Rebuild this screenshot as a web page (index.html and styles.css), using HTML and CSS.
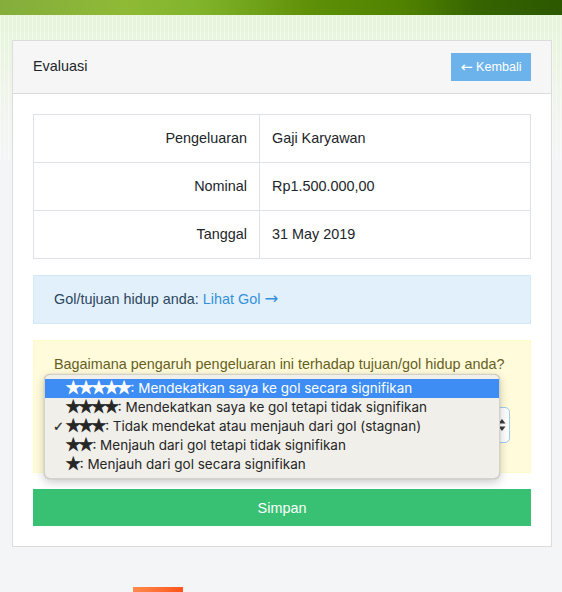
FILE: index.html
```html
<!DOCTYPE html>
<html lang="id">
<head>
<meta charset="utf-8">
<title>Evaluasi</title>
<link rel="stylesheet" href="styles.css">
</head>
<body>
<div class="topbar"></div>
<main class="page">
  <section class="card">
    <header class="card-header">
      <span class="card-title">Evaluasi</span>
      <a class="btn-back" href="#"><span class="arrow">←</span> Kembali</a>
    </header>
    <div class="card-body">
      <table class="detail">
        <colgroup><col class="col-label"><col></colgroup>
        <tr><th>Pengeluaran</th><td>Gaji Karyawan</td></tr>
        <tr><th>Nominal</th><td>Rp1.500.000,00</td></tr>
        <tr><th>Tanggal</th><td>31 May 2019</td></tr>
      </table>

      <div class="alert alert-info">Gol/tujuan hidup anda: <a class="link" href="#">Lihat Gol <span class="arrow">→</span></a></div>

      <div class="alert alert-warning">
        <div class="question">Bagaimana pengaruh pengeluaran ini terhadap tujuan/gol hidup anda?</div>
        <div class="select" role="combobox" aria-expanded="true">
          <svg class="select-arrows" width="8" height="14" viewBox="0 0 8 14"><path d="M4 1 L7.5 5.5 H0.5 Z M4 13 L7.5 8.5 H0.5 Z" fill="#3b3b3b"/></svg>
        </div>
        <ul class="menu" role="listbox">
          <li class="menu-item active"><span class="stars">★★★★★</span>: Mendekatkan saya ke gol secara signifikan</li>
          <li class="menu-item"><span class="stars">★★★★</span>: Mendekatkan saya ke gol tetapi tidak signifikan</li>
          <li class="menu-item checked"><span class="check">✓</span><span class="stars">★★★</span>: Tidak mendekat atau menjauh dari gol (stagnan)</li>
          <li class="menu-item"><span class="stars">★★</span>: Menjauh dari gol tetapi tidak signifikan</li>
          <li class="menu-item"><span class="stars">★</span>: Menjauh dari gol secara signifikan</li>
        </ul>
      </div>

      <button class="btn-save" type="button">Simpan</button>
    </div>
  </section>
  <div class="orange-tab"></div>
</main>
</body>
</html>
```

FILE: styles.css
```css
html, body {
  margin: 0;
  padding: 0;
}

body {
  font-family: "Liberation Sans", Arial, Helvetica, sans-serif;
  font-size: 14.4px;
  line-height: 1.6;
  color: #212529;
  background-color: #f4f5f7;
  background-image:
    repeating-linear-gradient(90deg, rgba(255,255,255,0.45) 0 1px, rgba(255,255,255,0) 1px 4px),
    linear-gradient(180deg, #e4f3d6 0px, #e9f5df 40px, #f1f5ee 110px, #f4f5f7 160px);
  background-size: 100% 160px, 100% 160px;
  background-repeat: no-repeat;
  overflow: hidden;
}

.topbar {
  height: 15px;
  background: linear-gradient(90deg, #84ad3c 0%, #8fba36 22%, #82b42c 35%, #5f9008 55%, #508200 72%, #366400 85%, #2c5800 100%);
}

.page {
  padding: 25px 10px 0 12px;
}

.card {
  width: 538px;
  background: #fff;
  border: 1px solid #dcdcdc;
}

.card-header {
  display: flex;
  align-items: center;
  justify-content: space-between;
  padding: 12px 20px;
  background: #f6f6f6;
  border-bottom: 1px solid #dcdcdc;
}

.card-title {
  line-height: 26px;
  padding-bottom: 2px;
}

.btn-back {
  display: inline-flex;
  align-items: center;
  justify-content: center;
  width: 80px;
  height: 28px;
  box-sizing: border-box;
  background: #6cb2eb;
  color: #fff;
  font-size: 12.6px;
  text-decoration: none;
  white-space: pre;
}

.arrow {
  font-family: "DejaVu Sans", sans-serif;
  font-size: 1.15em;
  line-height: 1;
}

.card-body {
  padding: 20px;
}

.detail {
  width: 100%;
  border-collapse: collapse;
  table-layout: fixed;
  margin-bottom: 16px;
}

.col-label {
  width: 226px;
}

.detail th,
.detail td {
  border: 1px solid #dee2e6;
  padding: 12px;
  height: 23px;
  font-weight: normal;
  vertical-align: middle;
}

.detail th {
  text-align: right;
}

.alert {
  padding: 12px 20px;
  margin-bottom: 16px;
  border: 1px solid transparent;
}

.alert-info {
  background: #e2f0fb;
  border-color: #d3e8f9;
  color: #2b475e;
  height: 23px;
}

.link {
  color: #3490dc;
  text-decoration: none;
}

.alert-warning {
  position: relative;
  background: #fffbdb;
  border-color: #fffac9;
  color: #665f1e;
}

.question {
  margin-bottom: 31px;
}

.select {
  display: flex;
  align-items: center;
  justify-content: flex-end;
  height: 36px;
  box-sizing: border-box;
  padding: 0 3px 0 12px;
  margin-bottom: 17px;
  background: #fff;
  border: 1px solid #a1cbef;
  border-radius: 5px;
}

.menu {
  position: absolute;
  top: 33px;
  left: 10px;
  width: 456px;
  margin: 0;
  padding: 4px 0;
  list-style: none;
  box-sizing: border-box;
  background: #f0efea;
  border: 0.5px solid rgba(0,0,0,0.12);
  border-radius: 6px;
  box-shadow: 0 3px 10px rgba(0,0,0,0.22), 0 0 1px rgba(0,0,0,0.3);
  font-family: Inter, "Liberation Sans", sans-serif;
  font-size: 13.5px;
  color: #262626;
}

.menu-item {
  position: relative;
  height: 19px;
  line-height: 19px;
  padding-left: 21px;
  white-space: nowrap;
}

.menu-item.active {
  background: #3d8df5;
  color: #fff;
}

.check {
  position: absolute;
  left: 8px;
  top: 0;
  font-family: "DejaVu Sans", sans-serif;
  font-size: 13px;
  -webkit-text-stroke: 0.3px currentColor;
}

.stars {
  font-family: "DejaVu Sans", sans-serif;
  font-size: 16.2px;
  letter-spacing: -1.8px;
  line-height: 1;
  margin-right: 1px;
  -webkit-text-stroke: 1px currentColor;
}

.btn-save {
  display: block;
  width: 100%;
  height: 37px;
  border: 0;
  background: #38c172;
  color: #fff;
  font-family: inherit;
  font-size: 14.4px;
}

.orange-tab {
  width: 50px;
  height: 20px;
  margin: 40px 0 0 121px;
  background: linear-gradient(100deg, #ff8a4c 0%, #ff6a2c 60%, #ff4e17 100%);
}
```
